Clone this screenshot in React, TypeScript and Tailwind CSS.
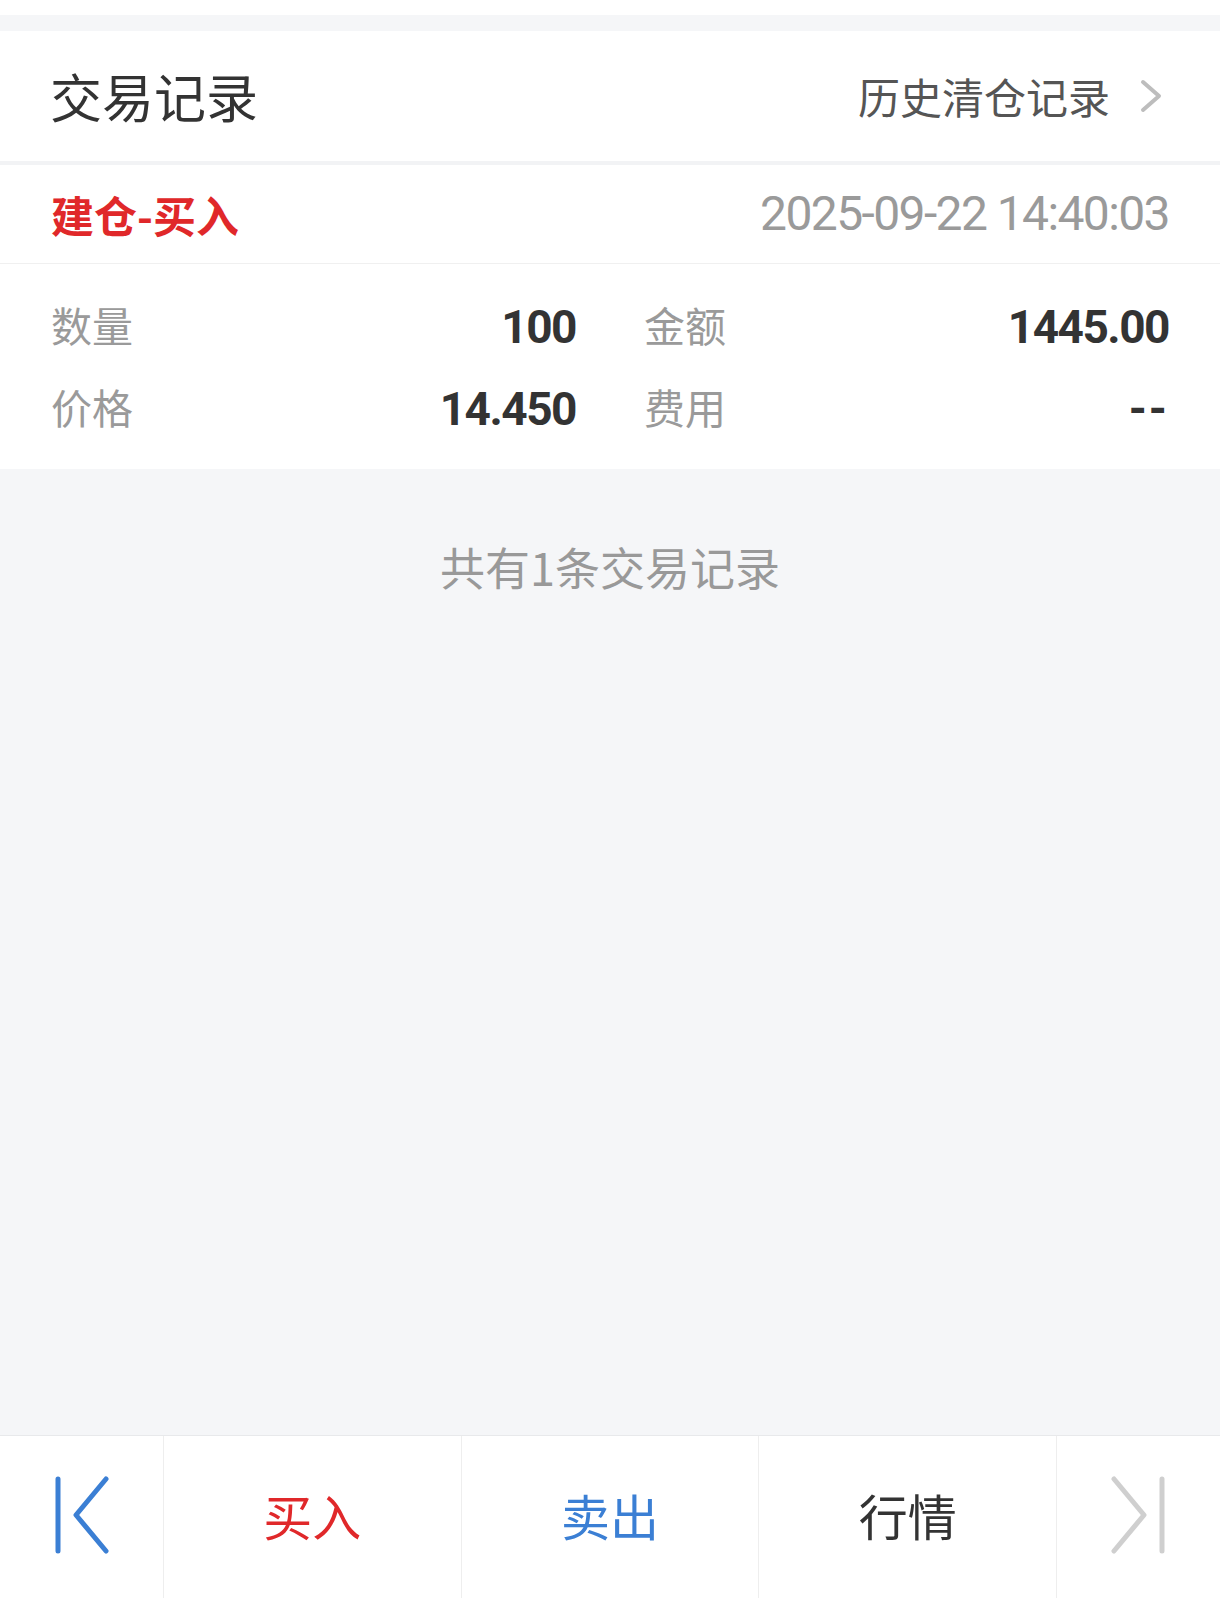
import React from "react";

const CJK = '"Noto Sans CJK SC", "Noto Sans", sans-serif';
const NUM = 'Roboto, "Noto Sans CJK SC", sans-serif';

interface Field {
  label: string;
  value: string;
}

const fields: Field[] = [
  { label: "数量", value: "100" },
  { label: "金额", value: "1445.00" },
  { label: "价格", value: "14.450" },
  { label: "费用", value: "--" },
];

function FirstIcon() {
  return (
    <svg width="56" height="80" viewBox="0 0 56 80" fill="none">
      <path
        d="M4 4 V76 M52 4 L22 40 L52 76"
        stroke="#3b7fd4"
        strokeWidth="5"
        strokeLinecap="round"
        strokeLinejoin="round"
      />
    </svg>
  );
}

function LastIcon() {
  return (
    <svg width="56" height="80" viewBox="0 0 56 80" fill="none">
      <path
        d="M52 4 V76 M4 4 L34 40 L4 76"
        stroke="#cfcfcf"
        strokeWidth="5"
        strokeLinecap="round"
        strokeLinejoin="round"
      />
    </svg>
  );
}

export default function App() {
  return (
    <div
      className="flex min-h-[1598px] w-full flex-col bg-[#f5f6f8]"
      style={{ fontFamily: CJK }}
    >
      <div className="h-[15px] bg-white" />
      <div className="h-[16px]" />

      {/* 标题栏 */}
      <div className="flex h-[130px] items-center justify-between bg-white pl-[50px] pr-[58px]">
        <h1 className="text-[52px] leading-none text-[#333]">交易记录</h1>
        <div className="flex items-center gap-[30px]">
          <span className="text-[42px] leading-none text-[#555]">历史清仓记录</span>
          <svg width="22" height="34" viewBox="0 0 22 34" fill="none">
            <path
              d="M3 3 L19 17 L3 31"
              stroke="#bdbdbd"
              strokeWidth="4"
              strokeLinecap="round"
              strokeLinejoin="round"
            />
          </svg>
        </div>
      </div>

      <div className="h-[4px] bg-[#f2f3f5]" />

      {/* 记录 */}
      <div className="flex h-[99px] items-center justify-between border-b border-[#f0f0f0] bg-white px-[51px]">
        <span className="text-[43px] font-bold leading-none text-[#e0282a]">建仓-买入</span>
        <span
          className="text-[48px] leading-none tracking-[-1.6px] text-[#9a9a9a]"
          style={{ fontFamily: NUM }}
        >
          2025-09-22 14:40:03
        </span>
      </div>

      <div className="grid grid-cols-2 gap-x-[68px] bg-white px-[51px] pb-[19px] pt-[22px]">
        {fields.map((f) => (
          <div key={f.label} className="flex h-[82px] items-center justify-between">
            <span className="pb-[5px] text-[41px] leading-none text-[#9a9a9a]">{f.label}</span>
            <span
              className={
                f.value === "--"
                  ? "text-[46px] font-bold leading-none tracking-[2px] text-[#333]"
                  : "text-[46px] font-bold leading-none tracking-[-1.5px] text-[#333]"
              }
              style={{ fontFamily: NUM }}
            >
              {f.value}
            </span>
          </div>
        ))}
      </div>

      <div className="flex flex-1 justify-center pt-[75px]">
        <p className="text-[45px] leading-none text-[#999]">共有1条交易记录</p>
      </div>

      {/* 底部操作栏 */}
      <div className="grid h-[163px] grid-cols-[163px_1fr_1fr_1fr_164px] border-t border-[#e8e9eb] bg-white">
        <div className="flex items-center justify-center pb-[4px]">
          <FirstIcon />
        </div>
        <div className="flex items-center justify-center border-l border-[#eeeeee] pb-[5px] text-[49px] leading-none text-[#e0282a]">
          买入
        </div>
        <div className="flex items-center justify-center border-l border-[#eeeeee] pb-[5px] text-[49px] leading-none text-[#3b7fd4]">
          卖出
        </div>
        <div className="flex items-center justify-center border-l border-[#eeeeee] pb-[5px] text-[49px] leading-none text-[#333]">
          行情
        </div>
        <div className="flex items-center justify-center border-l border-[#eeeeee] pb-[4px]">
          <LastIcon />
        </div>
      </div>
    </div>
  );
}
